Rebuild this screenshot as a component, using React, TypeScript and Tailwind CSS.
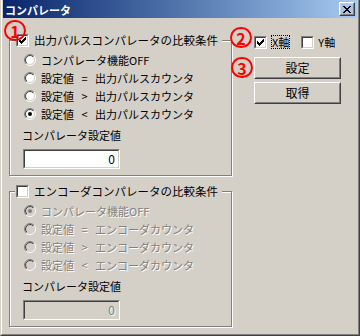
import React from "react";

const dim = "text-[#808080] [text-shadow:1px_1px_0_#fff]";

const CHECK_PIXELS: [number, number][] = [
  [6, 0],
  [5, 1], [6, 1],
  [0, 2], [4, 2], [5, 2], [6, 2],
  [0, 3], [1, 3], [3, 3], [4, 3], [5, 3],
  [0, 4], [1, 4], [2, 4], [3, 4], [4, 4],
  [1, 5], [2, 5], [3, 5],
  [2, 6],
];

const Check = ({ checked = false, className = "" }: { checked?: boolean; className?: string }) => (
  <span
    className={`flex w-[13px] h-[13px] shrink-0 border border-t-[#808080] border-l-[#808080] border-b-white border-r-white ${className}`}
  >
    <span className="flex-1 border border-t-[#404040] border-l-[#404040] border-b-[#d4d0c8] border-r-[#d4d0c8] bg-white">
      {checked && (
        <svg width="9" height="9" viewBox="0 0 9 9" shapeRendering="crispEdges">
          {CHECK_PIXELS.map(([x, y]) => (
            <rect key={`${x}-${y}`} x={x + 1} y={y + 1} width="1" height="1" fill="#000" />
          ))}
        </svg>
      )}
    </span>
  </span>
);

const Radio = ({ checked = false, disabled = false }: { checked?: boolean; disabled?: boolean }) => (
  <svg width="12" height="12" viewBox="0 0 12 12" className="shrink-0">
    <defs>
      <linearGradient id="rOuter" x1="0" y1="0" x2="1" y2="1">
        <stop offset="0.5" stopColor="#808080" />
        <stop offset="0.5" stopColor="#ffffff" />
      </linearGradient>
      <linearGradient id="rInner" x1="0" y1="0" x2="1" y2="1">
        <stop offset="0.5" stopColor="#404040" />
        <stop offset="0.5" stopColor="#d4d0c8" />
      </linearGradient>
    </defs>
    <circle cx="6" cy="6" r="5.5" fill="none" stroke="url(#rOuter)" strokeWidth="1" />
    <circle cx="6" cy="6" r="4.5" fill={disabled ? "#d4d0c8" : "#fff"} stroke="url(#rInner)" strokeWidth="1" />
    {checked && <circle cx="6" cy="6" r="2" fill={disabled ? "#808080" : "#000"} />}
  </svg>
);

const Button = ({ children, className = "" }: { children: React.ReactNode; className?: string }) => (
  <div
    className={`w-[87px] h-[22px] border border-t-white border-l-white border-b-[#404040] border-r-[#404040] ${className}`}
  >
    <div className="h-full flex items-center justify-center border border-t-[#d4d0c8] border-l-[#d4d0c8] border-b-[#808080] border-r-[#808080] text-[12px]">
      {children}
    </div>
  </div>
);

const Mark = ({ n, className }: { n: string; className: string }) => (
  <span
    className={`absolute flex items-center justify-center w-[22px] h-[21px] rounded-full border-2 border-[#f00] text-[#f00] text-[16px] font-bold leading-none ${className}`}
  >
    {n}
  </span>
);

type GroupProps = {
  title: string;
  checked: boolean;
  disabled: boolean;
  options: string[];
  selected: number;
  className?: string;
};

const Group = ({ title, checked, disabled, options, selected, className = "" }: GroupProps) => (
  <div
    className={`relative w-[223px] h-[136px] border border-[#808080] shadow-[inset_1px_1px_0_#fff,1px_1px_0_#fff] pt-[10px] ${className}`}
  >
    <div className="absolute -top-[9px] left-[5px] flex items-center h-[16px] gap-[5px] bg-[#d4d0c8] pl-[1px] pr-[4px]">
      <Check checked={checked} />
      <span className="text-[11.5px]">{title}</span>
    </div>
    {options.map((o, i) => (
      <div key={o} className="flex items-center h-[18px] pl-[14px] gap-[5px]">
        <Radio checked={i === selected} disabled={disabled} />
        <span className={`[word-spacing:5px] ${disabled ? dim : ""}`}>{o}</span>
      </div>
    ))}
    <div className="pl-[12px] mt-[3px] h-[18px]">コンパレータ設定値</div>
    <div className="ml-[13px] mt-[5px] w-[97px] h-[20px] border border-t-[#808080] border-l-[#808080] border-b-white border-r-white">
      <div
        className={`h-full border border-t-[#404040] border-l-[#404040] border-b-[#d4d0c8] border-r-[#d4d0c8] text-right pr-[3px] leading-[16px] text-[12px] ${
          disabled ? "bg-[#d4d0c8] " + dim : "bg-white"
        }`}
      >
        0
      </div>
    </div>
  </div>
);

export default function App() {
  return (
    <div className="relative w-[360px] h-[336px] flex flex-col bg-[#d4d0c8] border-l border-r border-b border-l-[#d4d0c8] border-r-[#404040] border-b-[#404040] font-['Noto_Sans_CJK_JP',sans-serif] text-[11px] leading-[18px] text-black overflow-hidden">
      <div className="flex-1 flex flex-col border-l border-r border-b border-l-white border-r-[#808080] border-b-[#808080] px-[1px]">
        <div className="h-[18px] flex items-center justify-between bg-gradient-to-r from-[#0a246a] to-[#a6caf0]">
          <span className="pl-[2px] pt-[2px] text-white font-bold text-[11px]">コンパレータ</span>
          <div className="mr-[2px] w-[16px] h-[14px] border border-t-white border-l-white border-b-[#404040] border-r-[#404040]">
            <div className="h-full flex items-center justify-center border border-t-[#d4d0c8] border-l-[#d4d0c8] border-b-[#808080] border-r-[#808080]">
              <svg width="8" height="7" viewBox="0 0 8 7" shapeRendering="crispEdges">
                <path d="M0 0h2v1h1v1h2v-1h1v-1h2v1h-1v1h-1v1h-1v1h1v1h1v1h1v1h-2v-1h-1v-1h-2v1h-1v1h-2v-1h1v-1h1v-1h1v-1h-1v-1h-1z" fill="#000" />
              </svg>
            </div>
          </div>
        </div>
        <div className="flex flex-1 pl-[6px]">
          <div className="flex flex-col pt-[22px]">
            <Group
              title="出力パルスコンパレータの比較条件"
              checked
              disabled={false}
              selected={3}
              options={["コンパレータ機能OFF", "設定値 = 出力パルスカウンタ", "設定値 > 出力パルスカウンタ", "設定値 < 出力パルスカウンタ"]}
            />
            <Group
              className="mt-[15px]"
              title="エンコーダコンパレータの比較条件"
              checked={false}
              disabled
              selected={0}
              options={["コンパレータ機能OFF", "設定値 = エンコーダカウンタ", "設定値 > エンコーダカウンタ", "設定値 < エンコーダカウンタ"]}
            />
          </div>
          <div className="flex flex-col ml-[22px] pt-[16px]">
            <div className="flex items-center h-[16px]">
              <Check checked />
              <span className="ml-[4px] h-[14px] leading-[12px] border border-dotted border-black">X軸</span>
              <Check className="ml-[11px]" />
              <span className="ml-[4px]">Y軸</span>
            </div>
            <Button className="mt-[7px]">設定</Button>
            <Button className="mt-[3px]">取得</Button>
          </div>
        </div>
      </div>
      <Mark n="1" className="left-[3px] top-[20px]" />
      <Mark n="2" className="left-[229px] top-[27px]" />
      <Mark n="3" className="left-[230px] top-[57px]" />
    </div>
  );
}
